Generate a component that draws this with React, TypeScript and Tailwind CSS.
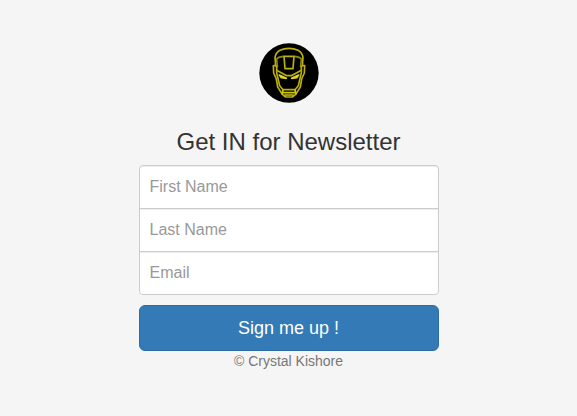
const fields = [
  { id: "firstName", label: "First Name", type: "text", shape: "rounded-t-[4px]" },
  { id: "lastName", label: "Last Name", type: "text", shape: "-mt-px" },
  { id: "email", label: "Email", type: "email", shape: "-mt-px rounded-b-[4px]" },
];

function Logo() {
  return (
    <svg viewBox="15 14 180 180" className="size-[60px]" role="img" aria-label="Logo">
      <circle cx="105" cy="104" r="89" fill="#000" />
      <g fill="none" stroke="#b9b00c" strokeWidth="5" strokeLinejoin="round" strokeLinecap="round">
        <path d="M65 82 L63 58 Q65 43 78 36 Q90 30 105 30 Q120 30 132 36 Q145 43 147 58 L145 82" />
        <path d="M70 84 L68 62 Q72 56 88 54 M140 84 L142 62 Q138 56 122 54" stroke="#8f8810" />
        <path d="M90 54 H120 L117 91 H93 Z" />
        <path d="M65 82 L58 82 L59 104 L67 122 L71 146 L85 168 L95 176 H115 L125 168 L139 146 L143 122 L151 104 L152 82 L145 82" />
        <path d="M68 84 L68 104 L77 142 L87 154 H123 L133 142 L142 104 L142 84" />
        <path d="M68 96 L98 112 H112 L142 96" />
        <path d="M76 110 L97 120 L82 118 Z M134 110 L113 120 L128 118 Z" stroke="#ded326" fill="#ded326" />
        <path d="M87 155 L84 166 M123 155 L126 166 M88 163 H122 M93 170 H117" stroke="#d0c60e" />
      </g>
    </svg>
  );
}

export default function App() {
  return (
    <main className="min-h-screen bg-[#f5f5f5] px-4 pt-[43px] pb-10 font-['Liberation_Sans',Arial,sans-serif] text-[#333]">
      <form className="mx-auto flex max-w-[300px] flex-col items-center" onSubmit={(e) => e.preventDefault()}>
        <Logo />
        <h1 className="mt-[26px] mb-[10px] text-2xl leading-[26px] font-normal">Get IN for Newsletter</h1>
        <div className="flex w-full flex-col">
          {fields.map(({ id, label, type, shape }) => (
            <input
              key={id}
              id={id}
              name={id}
              type={type}
              aria-label={label}
              placeholder={label}
              className={`h-11 w-full border border-[#ccc] bg-white px-[10px] text-base shadow-[inset_0_1px_1px_rgba(0,0,0,0.075)] placeholder:text-[#999] ${shape}`}
            />
          ))}
        </div>
        <button
          type="submit"
          className="mt-[10px] h-[46px] w-full rounded-md border border-[#2e6da4] bg-[#337ab7] text-lg text-white"
        >
          Sign me up !
        </button>
        <p className="text-sm leading-5 text-[#777]">© Crystal Kishore</p>
      </form>
    </main>
  );
}
